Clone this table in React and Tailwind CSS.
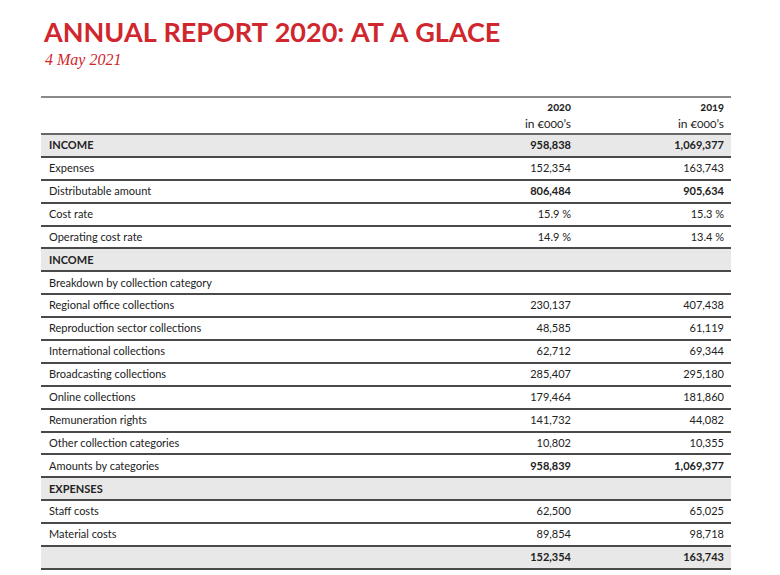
import React from 'react';

const rows = [
  { label: 'INCOME', a: '958,838', b: '1,069,377', type: 'section', bold: true },
  { label: 'Expenses', a: '152,354', b: '163,743' },
  { label: 'Distributable amount', a: '806,484', b: '905,634', bold: true },
  { label: 'Cost rate', a: '15.9 %', b: '15.3 %' },
  { label: 'Operating cost rate', a: '14.9 %', b: '13.4 %' },
  { label: 'INCOME', a: '', b: '', type: 'section' },
  { label: 'Breakdown by collection category', a: '', b: '' },
  { label: 'Regional office collections', a: '230,137', b: '407,438' },
  { label: 'Reproduction sector collections', a: '48,585', b: '61,119' },
  { label: 'International collections', a: '62,712', b: '69,344' },
  { label: 'Broadcasting collections', a: '285,407', b: '295,180' },
  { label: 'Online collections', a: '179,464', b: '181,860' },
  { label: 'Remuneration rights', a: '141,732', b: '44,082' },
  { label: 'Other collection categories', a: '10,802', b: '10,355' },
  { label: 'Amounts by categories', a: '958,839', b: '1,069,377', bold: true },
  { label: 'EXPENSES', a: '', b: '', type: 'section' },
  { label: 'Staff costs', a: '62,500', b: '65,025' },
  { label: 'Material costs', a: '89,854', b: '98,718' },
  { label: '', a: '152,354', b: '163,743', type: 'section', bold: true },
];

const App = () => {
  return (
    <div className="w-[780px] h-[575px] bg-white overflow-hidden font-['Lato',sans-serif] text-[#222]">
      <div className="pl-[44px] pt-[15px]">
        <h1 className="text-[27px] leading-[34px] font-bold text-[#d0262d] tracking-[0px] [word-spacing:1px]">
          ANNUAL REPORT 2020: AT A GLACE
        </h1>
        <div className="font-['Liberation_Serif',serif] italic text-[16px] leading-[20px] text-[#d0262d] pl-[1px] mt-[1px]">
          4 May 2021
        </div>
      </div>

      <div className="ml-[41px] mt-[26px] w-[690px] border-t-2 border-[#8a8a8a]">
        {/* header */}
        <div className="grid grid-cols-[1fr_153px_153px] h-[37px] border-b-2 border-[#666] items-end pb-[1px] oldstyle-nums">
          <div />
          <div className="text-right pr-[7px] leading-[17px]">
            <div className="text-[11px] font-bold">2020</div>
            <div className="text-[12px]">in €000’s</div>
          </div>
          <div className="text-right pr-[7px] leading-[17px]">
            <div className="text-[11px] font-bold">2019</div>
            <div className="text-[12px]">in €000’s</div>
          </div>
        </div>

        {rows.map((row, i) => (
          <div
            key={i}
            className={`grid grid-cols-[1fr_153px_153px] h-[22.9px] items-center border-b-2 border-[#4a4a4a] text-[11px] ${
              row.type === 'section' ? 'bg-[#e8e8e8]' : ''
            }`}
          >
            <div className={`pl-[8px] ${row.type === 'section' ? 'font-bold' : ''}`}>{row.label}</div>
            <div className={`text-right pr-[7px] ${row.bold ? 'font-bold' : ''}`}>{row.a}</div>
            <div className={`text-right pr-[7px] ${row.bold ? 'font-bold' : ''}`}>{row.b}</div>
          </div>
        ))}
      </div>
    </div>
  );
};

export default App;
